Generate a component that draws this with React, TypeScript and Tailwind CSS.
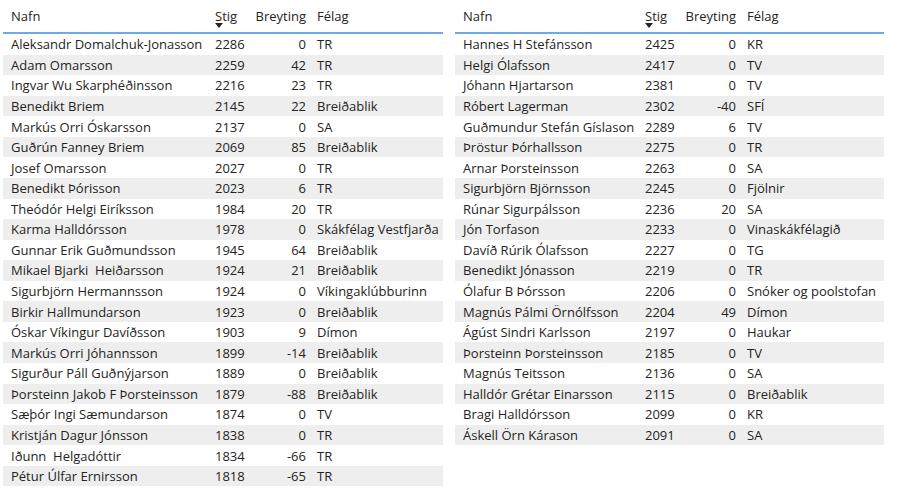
import React from "react";

type Row = [string, number, number, string];

const left: Row[] = [
  ["Aleksandr Domalchuk-Jonasson", 2286, 0, "TR"],
  ["Adam Omarsson", 2259, 42, "TR"],
  ["Ingvar Wu Skarphéðinsson", 2216, 23, "TR"],
  ["Benedikt Briem", 2145, 22, "Breiðablik"],
  ["Markús Orri Óskarsson", 2137, 0, "SA"],
  ["Guðrún Fanney Briem", 2069, 85, "Breiðablik"],
  ["Josef Omarsson", 2027, 0, "TR"],
  ["Benedikt Þórisson", 2023, 6, "TR"],
  ["Theódór Helgi Eiríksson", 1984, 20, "TR"],
  ["Karma Halldórsson", 1978, 0, "Skákfélag Vestfjarða"],
  ["Gunnar Erik Guðmundsson", 1945, 64, "Breiðablik"],
  ["Mikael Bjarki  Heiðarsson", 1924, 21, "Breiðablik"],
  ["Sigurbjörn Hermannsson", 1924, 0, "Víkingaklúbburinn"],
  ["Birkir Hallmundarson", 1923, 0, "Breiðablik"],
  ["Óskar Víkingur Davíðsson", 1903, 9, "Dímon"],
  ["Markús Orri Jóhannsson", 1899, -14, "Breiðablik"],
  ["Sigurður Páll Guðnýjarson", 1889, 0, "Breiðablik"],
  ["Þorsteinn Jakob F Þorsteinsson", 1879, -88, "Breiðablik"],
  ["Sæþór Ingi Sæmundarson", 1874, 0, "TV"],
  ["Kristján Dagur Jónsson", 1838, 0, "TR"],
  ["Iðunn  Helgadóttir", 1834, -66, "TR"],
  ["Pétur Úlfar Ernirsson", 1818, -65, "TR"],
];

const right: Row[] = [
  ["Hannes H Stefánsson", 2425, 0, "KR"],
  ["Helgi Ólafsson", 2417, 0, "TV"],
  ["Jóhann Hjartarson", 2381, 0, "TV"],
  ["Róbert Lagerman", 2302, -40, "SFÍ"],
  ["Guðmundur Stefán Gíslason", 2289, 6, "TV"],
  ["Þröstur Þórhallsson", 2275, 0, "TR"],
  ["Arnar Þorsteinsson", 2263, 0, "SA"],
  ["Sigurbjörn Björnsson", 2245, 0, "Fjölnir"],
  ["Rúnar Sigurpálsson", 2236, 20, "SA"],
  ["Jón Torfason", 2233, 0, "Vinaskákfélagið"],
  ["Davíð Rúrik Ólafsson", 2227, 0, "TG"],
  ["Benedikt Jónasson", 2219, 0, "TR"],
  ["Ólafur B Þórsson", 2206, 0, "Snóker og poolstofan"],
  ["Magnús Pálmi Örnólfsson", 2204, 49, "Dímon"],
  ["Ágúst Sindri Karlsson", 2197, 0, "Haukar"],
  ["Þorsteinn Þorsteinsson", 2185, 0, "TV"],
  ["Magnús Teitsson", 2136, 0, "SA"],
  ["Halldór Grétar Einarsson", 2115, 0, "Breiðablik"],
  ["Bragi Halldórsson", 2099, 0, "KR"],
  ["Áskell Örn Kárason", 2091, 0, "SA"],
];

const Table = ({ rows, cols, width }: { rows: Row[]; cols: string; width: string }) => {
  return (
    <div className={`${width} shrink-0`}>
      <div className={`grid ${cols} h-[32px] text-[#252423]`}>
        <div className="pl-[8px] pt-[7px]">Nafn</div>
        <div className="relative pl-[6px] pt-[7px]">
          Stig
          <svg className="absolute left-[6px] top-[23px]" width="8" height="5" viewBox="0 0 8 5">
            <path d="M0 0 L8 0 L4 5 Z" fill="#252423" />
          </svg>
        </div>
        <div className="pr-[4px] pt-[7px] text-right">Breyting</div>
        <div className="pl-[7px] pt-[7px]">Félag</div>
      </div>
      <div className="h-[2px] bg-[#6fa8e4]" />
      {rows.map((r, i) => (
        <div
          key={i}
          className={`grid ${cols} h-[20.57px] items-center whitespace-pre text-[#252423] ${
            i % 2 === 1 ? "bg-[#eeeeee]" : "bg-white"
          }`}
        >
          <div className="pl-[8px] overflow-hidden">{r[0]}</div>
          <div className="pl-[6px]">{r[1]}</div>
          <div className="pr-[4px] text-right">{r[2]}</div>
          <div className="pl-[7px] overflow-hidden">{r[3]}</div>
        </div>
      ))}
    </div>
  );
};

export default function App() {
  return (
    <div
      className="w-[901px] h-[500px] bg-white flex gap-[12px] pl-[3px] text-[13px] leading-[18px]"
      style={{ fontFamily: '"Open Sans", "Noto Sans", sans-serif' }}
    >
      <Table rows={left} width="w-[440px]" cols="grid-cols-[206px_40px_61px_1fr]" />
      <Table rows={right} width="w-[429px]" cols="grid-cols-[184px_40px_61px_1fr]" />
    </div>
  );
}
